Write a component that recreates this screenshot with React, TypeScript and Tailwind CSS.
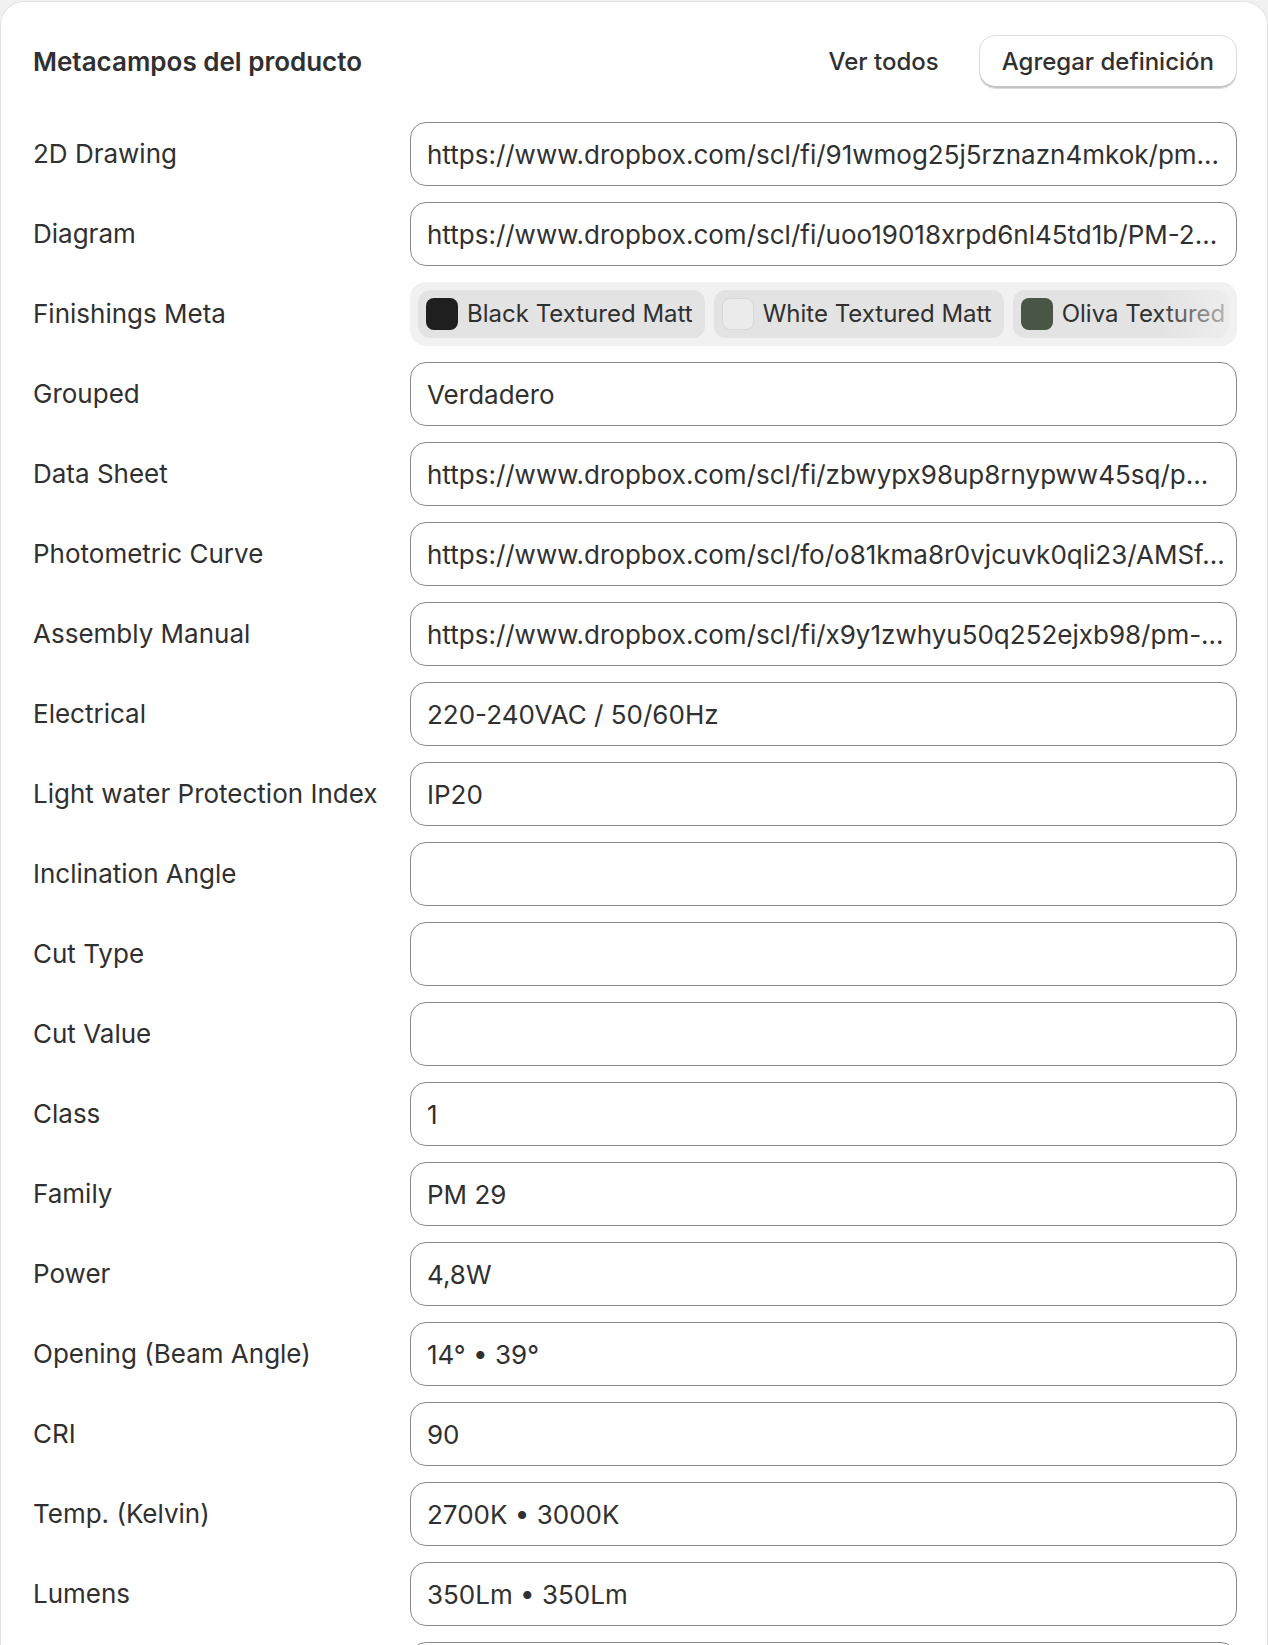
import React from "react";

type Row = { label: string; value?: string; kind?: "chips" };

const rows: Row[] = [
  { label: "2D Drawing", value: "https://www.dropbox.com/scl/fi/91wmog25j5rznazn4mkok/pm..." },
  { label: "Diagram", value: "https://www.dropbox.com/scl/fi/uoo19018xrpd6nl45td1b/PM-2..." },
  { label: "Finishings Meta", kind: "chips" },
  { label: "Grouped", value: "Verdadero" },
  { label: "Data Sheet", value: "https://www.dropbox.com/scl/fi/zbwypx98up8rnypww45sq/p..." },
  { label: "Photometric Curve", value: "https://www.dropbox.com/scl/fo/o81kma8r0vjcuvk0qli23/AMSf..." },
  { label: "Assembly Manual", value: "https://www.dropbox.com/scl/fi/x9y1zwhyu50q252ejxb98/pm-..." },
  { label: "Electrical", value: "220-240VAC / 50/60Hz" },
  { label: "Light water Protection Index", value: "IP20" },
  { label: "Inclination Angle", value: "" },
  { label: "Cut Type", value: "" },
  { label: "Cut Value", value: "" },
  { label: "Class", value: "1" },
  { label: "Family", value: "PM 29" },
  { label: "Power", value: "4,8W" },
  { label: "Opening (Beam Angle)", value: "14° • 39°" },
  { label: "CRI", value: "90" },
  { label: "Temp. (Kelvin)", value: "2700K • 3000K" },
  { label: "Lumens", value: "350Lm • 350Lm" },
  // next row is cut off by the bottom of the screenshot
  { label: "", value: "" },
];

const finishes = [
  { name: "Black Textured Matt", swatch: "bg-[#1f1f1f]" },
  { name: "White Textured Matt", swatch: "bg-[#ebebeb] border border-[#d8d8d8]" },
  { name: "Oliva Textured", swatch: "bg-[#4a5645]" },
];

function Chips() {
  return (
    <div className="relative h-16 rounded-2xl bg-[#f1f1f1] p-2 overflow-hidden">
      <div className="flex gap-[9px] overflow-hidden rounded-xl h-12">
        {finishes.map((f) => (
          <div
            key={f.name}
            className="flex items-center gap-[9px] h-12 pl-2 pr-3 rounded-xl bg-[#e3e3e3] shrink-0 text-[24px]"
          >
            <span className={`w-8 h-8 rounded-lg ${f.swatch}`} />
            <span className="whitespace-nowrap">{f.name}</span>
          </div>
        ))}
      </div>
      <div className="absolute right-0 top-0 h-full w-20 bg-gradient-to-l from-[#f1f1f1]/80 to-transparent pointer-events-none" />
    </div>
  );
}

export default function App() {
  return (
    <div className="min-h-screen bg-[#f1f1f1] pt-[1px] font-['Inter',sans-serif] text-[#303030] text-[26px]">
      <div className="bg-white rounded-t-[24px] border border-b-0 border-[#e3e3e3] pl-8 pr-[30px] pt-8 pb-8">
        <div className="flex items-center justify-between h-[55px]">
          <h2 className="font-semibold text-[26px]">Metacampos del producto</h2>
          <div className="flex items-center gap-4">
            <button className="h-[54px] px-6 font-medium text-[24px] text-[#303030]">Ver todos</button>
            <button className="h-[54px] px-[22px] rounded-2xl bg-white border border-[#dcdcdc] shadow-[inset_0_-2px_0_0_#c4c4c4] font-medium text-[24px] text-[#303030]">
              Agregar definición
            </button>
          </div>
        </div>

        <div className="mt-[33px] flex flex-col gap-4">
          {rows.map((r, i) => (
            <div key={i} className="grid grid-cols-[353px_1fr] gap-x-6 items-center">
              <div className="leading-8">{r.label}</div>
              {r.kind === "chips" ? (
                <Chips />
              ) : (
                <div className="h-16 rounded-2xl border border-[#8a8a8a] bg-white pl-4 flex items-center min-w-0 overflow-hidden">
                  <span className="whitespace-nowrap overflow-hidden">{r.value}</span>
                </div>
              )}
            </div>
          ))}
        </div>
      </div>
    </div>
  );
}
